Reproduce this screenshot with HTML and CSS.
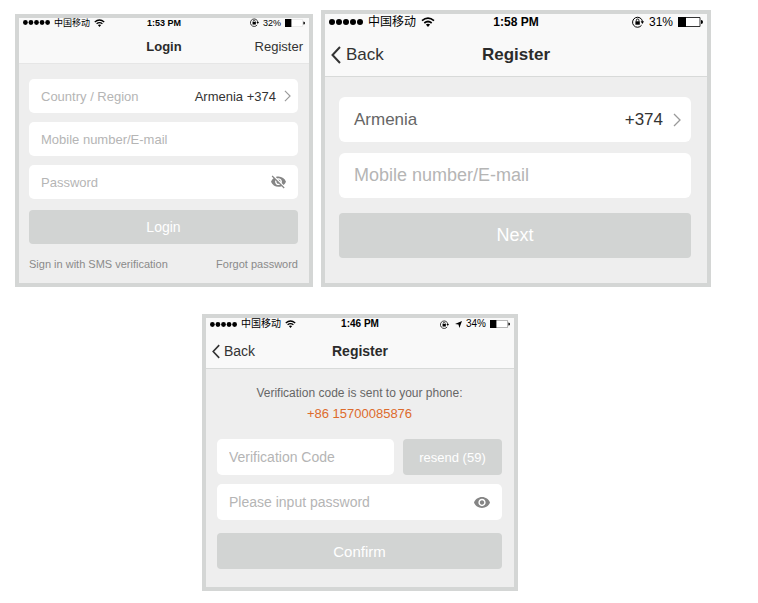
FILE: index.html
```html
<!DOCTYPE html>
<html lang="en">
<head>
<meta charset="UTF-8" />
<meta name="viewport" content="width=device-width, initial-scale=1.0"/>
<title>Login and Register</title>
<link rel="stylesheet" href="styles.css">
</head>
<body>
<svg class="sprite" aria-hidden="true">
  <symbol id="icon-signal" viewBox="0 0 34 6">
    <circle cx="3" cy="3" r="3"/><circle cx="10" cy="3" r="3"/><circle cx="17" cy="3" r="3"/><circle cx="24" cy="3" r="3"/><circle cx="31" cy="3" r="3"/>
  </symbol>
  <symbol id="icon-wifi" viewBox="0 0 14 10">
    <path d="M1 3.6Q7-1.4 13 3.6M3.3 6Q7 3 10.7 6" fill="none" stroke="currentColor" stroke-width="1.7"/>
    <path d="M4.9 7.6Q7 6 9.1 7.6L7 10z"/>
  </symbol>
  <symbol id="icon-lock" viewBox="0 0 12 12">
    <path d="M9.6 9.2A5 5 0 1 1 10.5 5.5" fill="none" stroke="currentColor" stroke-width="1"/>
    <path d="M8.6 5.2h3.4L10.4 8z"/>
    <path d="M3.4 5.3h4.4v3.4H3.4z"/>
    <path d="M4.3 5.5V4.3a1.3 1.3 0 0 1 2.6 0v1.2" fill="none" stroke="currentColor" stroke-width=".9"/>
  </symbol>
  <symbol id="icon-location" viewBox="0 0 8 8">
    <path d="M8 0 5 8 4 4 0 3.4z"/>
  </symbol>
  <symbol id="icon-battery" viewBox="0 0 25 10">
    <path class="battery-shell" d="M.5.5h21.5v9H.5z"/>
    <path d="M0 0h8v10H0z"/>
    <path d="M23 3q2 0 2 2t-2 2z"/>
  </symbol>
  <symbol id="icon-back" viewBox="0 0 10 18">
    <path d="M9 1 1.5 9 9 17" fill="none" stroke="currentColor" stroke-width="2"/>
  </symbol>
  <symbol id="icon-next" viewBox="0 0 8 14">
    <path d="M1 1l6 6-6 6" fill="none" stroke="currentColor" stroke-width="1.3"/>
  </symbol>
  <symbol id="icon-eye" viewBox="1 4.5 22 15">
    <path d="M12 4.5C7 4.5 2.73 7.61 1 12c1.73 4.39 6 7.5 11 7.5s9.27-3.11 11-7.5c-1.73-4.39-6-7.5-11-7.5zM12 17c-2.76 0-5-2.24-5-5s2.24-5 5-5 5 2.24 5 5-2.24 5-5 5zm0-8c-1.66 0-3 1.34-3 3s1.34 3 3 3 3-1.34 3-3-1.34-3-3-3z"/>
  </symbol>
  <symbol id="icon-eye-off" viewBox="1 2.5 22 20">
    <path d="M12 7c2.76 0 5 2.24 5 5 0 .65-.13 1.26-.36 1.83l2.92 2.92c1.51-1.26 2.7-2.89 3.43-4.75-1.73-4.39-6-7.5-11-7.5-1.4 0-2.74.25-3.98.7l2.16 2.16C10.74 7.13 11.35 7 12 7zM2 4.27l2.28 2.28.46.46C3.08 8.3 1.78 10.02 1 12c1.73 4.39 6 7.5 11 7.5 1.55 0 3.03-.3 4.38-.84l.42.42L19.73 22 21 20.73 3.27 3 2 4.27zM7.53 9.8l1.55 1.55c-.05.21-.08.43-.08.65 0 1.66 1.34 3 3 3 .22 0 .44-.03.65-.08l1.55 1.55c-.67.33-1.41.53-2.2.53-2.76 0-5-2.24-5-5 0-.79.2-1.53.53-2.2zm4.31-.78l3.15 3.15.02-.16c0-1.66-1.34-3-3-3l-.17.01z"/>
  </symbol>
</svg>

<main class="board">
  <section class="phone phone-login">
    <header class="top-bar">
      <div class="status">
        <div class="status-side">
          <svg class="signal"><use href="#icon-signal"/></svg>
          <span lang="zh">中国移动</span>
          <svg class="wifi"><use href="#icon-wifi"/></svg>
        </div>
        <span class="time">1:53 PM</span>
        <div class="status-side status-right">
          <svg class="lock"><use href="#icon-lock"/></svg>
          <span>32%</span>
          <svg class="battery"><use href="#icon-battery"/></svg>
        </div>
      </div>
      <nav class="nav">
        <span></span>
        <h1>Login</h1>
        <a class="nav-right" href="#register">Register</a>
      </nav>
    </header>
    <form class="form">
      <button class="field picker" type="button">
        <span class="hint">Country / Region</span>
        <span class="value">Armenia +374</span>
        <svg class="chevron"><use href="#icon-next"/></svg>
      </button>
      <div class="field">
        <input type="text" placeholder="Mobile number/E-mail" aria-label="Mobile number/E-mail" />
      </div>
      <div class="field">
        <input type="password" placeholder="Password" aria-label="Password" />
        <button class="eye-button" type="button" aria-label="Show password"><svg class="eye-off"><use href="#icon-eye-off"/></svg></button>
      </div>
      <button class="main-button" type="submit">Login</button>
      <div class="links">
        <a href="#sms">Sign in with SMS verification</a>
        <a href="#forgot">Forgot password</a>
      </div>
    </form>
  </section>

  <section class="phone phone-register" id="register">
    <header class="top-bar">
      <div class="status">
        <div class="status-side">
          <svg class="signal"><use href="#icon-signal"/></svg>
          <span lang="zh">中国移动</span>
          <svg class="wifi"><use href="#icon-wifi"/></svg>
        </div>
        <span class="time">1:58 PM</span>
        <div class="status-side status-right">
          <svg class="lock"><use href="#icon-lock"/></svg>
          <span>31%</span>
          <svg class="battery"><use href="#icon-battery"/></svg>
        </div>
      </div>
      <nav class="nav">
        <a class="back" href="#back"><svg><use href="#icon-back"/></svg>Back</a>
        <h1>Register</h1>
        <span></span>
      </nav>
    </header>
    <form class="form">
      <button class="field picker" type="button">
        <span class="country">Armenia</span>
        <span class="value">+374</span>
        <svg class="chevron"><use href="#icon-next"/></svg>
      </button>
      <div class="field">
        <input type="text" placeholder="Mobile number/E-mail" aria-label="Mobile number/E-mail" />
      </div>
      <button class="main-button" type="submit">Next</button>
    </form>
  </section>

  <section class="phone phone-verify">
    <header class="top-bar">
      <div class="status">
        <div class="status-side">
          <svg class="signal"><use href="#icon-signal"/></svg>
          <span lang="zh">中国移动</span>
          <svg class="wifi"><use href="#icon-wifi"/></svg>
        </div>
        <span class="time">1:46 PM</span>
        <div class="status-side status-right">
          <svg class="lock"><use href="#icon-lock"/></svg>
          <svg class="location"><use href="#icon-location"/></svg>
          <span>34%</span>
          <svg class="battery"><use href="#icon-battery"/></svg>
        </div>
      </div>
      <nav class="nav">
        <a class="back" href="#back"><svg><use href="#icon-back"/></svg>Back</a>
        <h1>Register</h1>
        <span></span>
      </nav>
    </header>
    <form class="form">
      <div class="message">
        <p>Verification code is sent to your phone:</p>
        <p class="phone-number">+86 15700085876</p>
      </div>
      <div class="code-row">
        <div class="field">
          <input type="text" placeholder="Verification Code" aria-label="Verification Code" />
        </div>
        <button class="resend" type="button">resend (59)</button>
      </div>
      <div class="field">
        <input type="password" placeholder="Please input password" aria-label="Please input password" />
        <button class="eye-button" type="button" aria-label="Hide password"><svg class="eye"><use href="#icon-eye"/></svg></button>
      </div>
      <button class="main-button" type="submit">Confirm</button>
    </form>
  </section>
</main>
</body>
</html>
```

FILE: styles.css
```css
* {
  box-sizing: border-box;
}

body {
  margin: 0;
  background: #fff;
  color: #333;
  font-family: "Liberation Sans", "Noto Sans CJK SC", sans-serif;
}

svg {
  display: block;
  flex: none;
  fill: currentColor;
}

.sprite {
  position: absolute;
  width: 0;
  height: 0;
}

a {
  color: inherit;
  text-decoration: none;
}

button,
input {
  font: inherit;
  border: none;
}

button {
  cursor: pointer;
}

.board {
  display: grid;
  grid-template-columns: 298fr 390fr;
  column-gap: 8px;
  row-gap: 27px;
  align-items: end;
  max-width: 758px;
  padding: 10px 47px 10px 15px;
}

.phone {
  border: 4px solid #d4d6d5;
  background: #eeeeee;
  font-size: var(--text);
}

/* sizes for each screen */
.phone-login {
  --text: 13px;
  --status-text: 9px;
  --status-height: 8px;
  --nav-height: 37px;
  --field-height: 34px;
  --field-gap: 9px;
  --field-padding: 12px;
  --radius: 5px;
  --button-text: 14px;
  --battery-line: #e2e2e2;
}

.phone-register {
  --text: 17px;
  --status-text: 12px;
  --status-height: 16px;
  --nav-height: 46px;
  --field-height: 45px;
  --field-gap: 11px;
  --field-padding: 15px;
  --radius: 6px;
  --button-text: 18px;
  --battery-line: #333;
}

.phone-verify {
  --text: 14px;
  --status-text: 10px;
  --status-height: 12px;
  --nav-height: 38px;
  --field-height: 36px;
  --field-gap: 9px;
  --field-padding: 12px;
  --radius: 5px;
  --button-text: 15px;
  --battery-line: #999;
  grid-column: 1 / -1;
  justify-self: center;
  width: 316px;
  max-width: 100%;
  margin-right: 6px;
}

/* status bar and title */
.top-bar {
  background: #f9f9f9;
  border-bottom: 1px solid #d8dad9;
}

.phone-login .top-bar {
  border-bottom-color: #e6e6e6;
}

.status,
.nav {
  display: grid;
  grid-template-columns: 1fr auto 1fr;
  align-items: center;
}

.status {
  height: var(--status-height);
  padding: 0 4px;
  color: #000;
  font-size: var(--status-text);
  line-height: var(--status-height);
}

.status-side {
  display: flex;
  align-items: center;
  gap: 4px;
  white-space: nowrap;
}

.status-right {
  justify-content: flex-end;
}

.time {
  font-weight: bold;
}

.signal {
  width: 27px;
  height: 5px;
}

.wifi {
  width: 11px;
  height: 8px;
}

.lock {
  width: 9px;
  height: 9px;
}

.location {
  width: 7px;
  height: 7px;
  margin-left: 2px;
}

.battery {
  width: 20px;
  height: 8px;
}

.battery-shell {
  fill: #fff;
  stroke: var(--battery-line);
  stroke-width: 1px;
}

.phone-register .status-side {
  gap: 5px;
}

.phone-register .signal {
  width: 34px;
  height: 6px;
}

.phone-register .wifi {
  width: 14px;
  height: 10px;
}

.phone-register .lock {
  width: 12px;
  height: 12px;
}

.phone-register .battery {
  width: 25px;
  height: 10px;
}

.nav {
  height: var(--nav-height);
  padding: 4px 6px 0;
}

.nav h1 {
  margin: 0;
  font-size: inherit;
  color: #2b2b2b;
}

.nav-right {
  justify-self: end;
}

.back {
  display: flex;
  align-items: center;
  gap: 4px;
}

.back svg {
  width: 8px;
  height: 15px;
}

.phone-register .back {
  gap: 5px;
}

.phone-register .back svg {
  width: 10px;
  height: 18px;
}

/* forms */
.form {
  display: flex;
  flex-direction: column;
  gap: var(--field-gap);
  padding: 15px 11px 12px 10px;
}

.phone-register .form {
  padding: 20px 16px 25px 14px;
}

.phone-verify .form {
  padding: 15px 12px 18px 11px;
}

.field {
  display: flex;
  align-items: center;
  width: 100%;
  height: var(--field-height);
  padding: 0 var(--field-padding);
  background: #fff;
  border-radius: var(--radius);
}

.field input {
  flex: 1;
  min-width: 0;
  padding: 0;
  background: none;
  color: #333;
  outline: none;
}

.phone-register .field input {
  font-size: 18px;
}

.field input::placeholder,
.hint {
  color: #b5b5b5;
  opacity: 1;
}

.picker {
  color: #333;
  text-align: left;
}

.picker .value {
  margin-left: auto;
}

.country {
  color: #666;
}

.chevron {
  width: 7px;
  height: 12px;
  margin: 0 -5px 0 8px;
  color: #999;
}

.phone-register .chevron {
  width: 8px;
  height: 14px;
  margin: 0 -5px 0 10px;
}

.eye-button {
  padding: 0;
  background: none;
  color: #858585;
}

.eye {
  width: 16px;
  height: 11px;
}

.eye-off {
  width: 15px;
  height: 14px;
}

.main-button,
.resend {
  height: var(--field-height);
  padding: 0;
  border-radius: 4px;
  background: #d2d4d3;
  color: #fff;
}

.main-button {
  margin-top: 4px;
  font-size: var(--button-text);
}

.phone-login .main-button {
  margin-top: 2px;
}

.resend {
  flex: 0 0 99px;
  font-size: 13px;
}

.links {
  display: flex;
  justify-content: space-between;
  margin-top: 4px;
  color: #8a8a8a;
  font-size: 11px;
  line-height: 14px;
}

.message {
  margin-bottom: 4px;
  text-align: center;
  color: #666;
  font-size: 12px;
}

.message p {
  margin: 0;
  line-height: 18px;
}

.message .phone-number {
  color: #dd6b2c;
  font-size: 13px;
  line-height: 24px;
}

.code-row {
  display: flex;
  gap: 9px;
}

.code-row .field {
  flex: 1;
  width: auto;
  min-width: 0;
}

@media (max-width: 600px) {
  .board {
    grid-template-columns: 1fr;
    padding: 10px;
  }
}
```
